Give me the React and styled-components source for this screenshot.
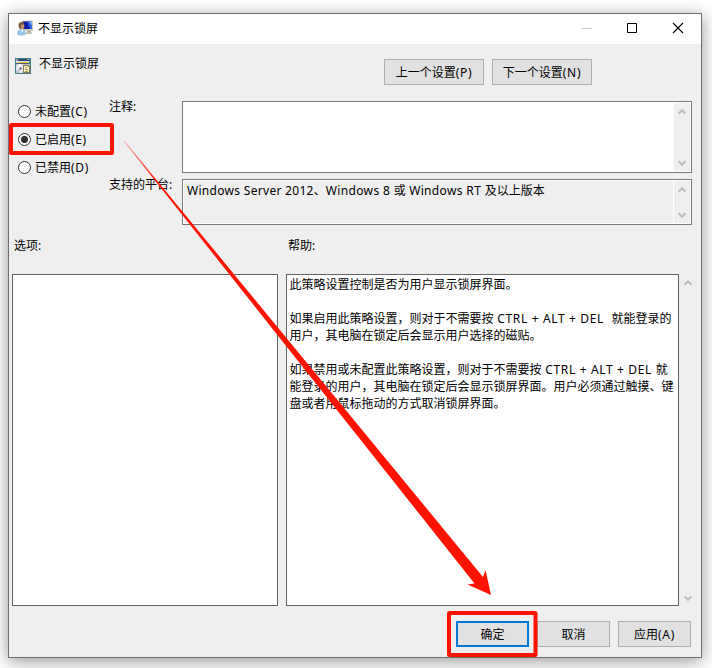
import styled, { createGlobalStyle } from 'styled-components';

const GlobalStyle = createGlobalStyle`
  * {
    box-sizing: border-box;
  }
  body {
    margin: 0;
    background: #fff;
    color: #000;
    font: 12px/17px 'Noto Sans', 'Noto Sans CJK SC', sans-serif;
    overflow: hidden;
  }
`;

//Latin runs are set a bit wider than the Chinese text around them
const Latin = styled.span`
  letter-spacing: ${({ $track }) => $track || 0.65}px;
  white-space: pre;
`;

const Chevron = ({ down }) => (
  <svg width='8' height='7' viewBox='0 0 8 7'>
    <path
      d={down ? 'M0.5 1.2 L4 4.7 L7.5 1.2' : 'M0.5 5.8 L4 2.3 L7.5 5.8'}
      fill='none'
      stroke='#bdbdbd'
      strokeWidth='2.2'
    />
  </svg>
);

const Scrollbar = () => (
  <StyledScrollbar>
    <Chevron />
    <Chevron down />
  </StyledScrollbar>
);

//user in front of a monitor
const TitleIcon = () => (
  <svg width='17' height='16' viewBox='0 0 17 16'>
    <path d='M5 0.500h11v10.500H5z' fill='#cdccc0' />
    <path d='M6 1.500h9v7.500H6z' fill='#0b1fa8' />
    <path d='M10 1.500h5v7.500h-2z' fill='#2f62e0' />
    <path d='M12 1.500h3v4z' fill='#8db4f5' />
    <path d='M10 11h4v2h-4z' fill='#aaa99c' />
    <path d='M8 12.500h7v1.500H8z' fill='#c4c3b8' />
    <path d='M1.500 5c0-2 1.500-3 3.500-3s2.500 2 2.500 4-1 3.500-3 3.500S1.500 7 1.500 5z' fill='#77573a' />
    <path d='M4 4.500h3v3.500L5.500 9.500 4 8z' fill='#c4976c' />
    <path d='M0 14c0-3 1.500-5 4.500-5S9 11 9 14l-2 1.500H2z' fill='#9ac3e6' />
    <path d='M3.500 9.500l2 3 1-3z' fill='#eef7fd' />
  </svg>
);

//settings window with a disc and a sheet
const PolicyIcon = () => (
  <svg width='16' height='16' viewBox='0 0 16 16' shapeRendering='crispEdges'>
    <path d='M0 0h16v16H0z' fill='#3f7f86' />
    <path d='M1 1h13v2H1z' fill='#2c4678' />
    <path d='M1 1h2v2H1zM12 1h2v1h-2z' fill='#9aa9bf' />
    <path d='M1 3h13v3H1z' fill='#d9d9d2' />
    <path d='M4 4h9v1H4z' fill='#f0c52c' />
    <path d='M1 5h13v1H1z' fill='#4b5a72' />
    <path d='M1 6h14v9H1z' fill='#b9bfc4' />
    <g shapeRendering='auto'>
      <circle cx='5.500' cy='10.500' r='4.500' fill='#e9e9f1' />
      <path d='M5.500 10.500L2 7.500l3-1.500z' fill='#fff' />
      <path d='M5.500 10.500l-4 2 2 2z' fill='#c3b8d8' />
      <circle cx='5.500' cy='10.500' r='1.200' fill='#6a6a78' />
    </g>
    <path d='M8 7h5l2 2v6H8z' fill='#8a7a4e' />
    <path d='M9 8h4v1h1v5H9z' fill='#fff3c4' />
    <path d='M10 9h2v1h-2zM10 11h3v1h-3zM10 13h3v1h-3z' fill='#a8935a' />
  </svg>
);

const choices = [
  { label: '未配置', hotkey: '(C)' },
  { label: '已启用', hotkey: '(E)', checked: true },
  { label: '已禁用', hotkey: '(D)' },
];

const App = () => {
  return (
    <StyledDesktop>
      <GlobalStyle />
      <StyledWindow>
        <StyledTitleBar>
          <TitleIcon />
          <span>不显示锁屏</span>
          <svg width='104' height='12' viewBox='0 0 104 12'>
            <path d='M0 6.500h10' stroke='#ccc' />
            <path d='M45.500 1.500h9v9h-9z' fill='none' stroke='#000' />
            <path d='M91 1l10 10M101 1l-10 10' stroke='#000' strokeWidth='1.1' />
          </svg>
        </StyledTitleBar>
        <StyledHeader>
          <PolicyIcon />
          <h1>不显示锁屏</h1>
          <StyledButton $width={100}>
            上一个设置<Latin>(P)</Latin>
          </StyledButton>
          <StyledButton $width={100}>
            下一个设置<Latin>(N)</Latin>
          </StyledButton>
        </StyledHeader>
        <StyledSettings>
          <StyledRadios>
            {choices.map(({ label, hotkey, checked }) => (
              <StyledRadio key={label}>
                <StyledDot $checked={checked} />
                <span>
                  {label}
                  <Latin>{hotkey}</Latin>
                </span>
              </StyledRadio>
            ))}
          </StyledRadios>
          <StyledFields>
            <StyledFieldLabel>注释:</StyledFieldLabel>
            <StyledField $height={72} $fill='#fff'>
              <StyledFieldText />
              <Scrollbar />
            </StyledField>
            <StyledFieldLabel>支持的平台:</StyledFieldLabel>
            <StyledField $height={46} $fill='#efefef'>
              <StyledFieldText>
                <Latin $track={0.3}>Windows Server 2012</Latin>、
                <Latin $track={0.35}>Windows 8 </Latin>或
                <Latin $track={0.35}> Windows RT </Latin>及以上版本
              </StyledFieldText>
              <Scrollbar />
            </StyledField>
          </StyledFields>
        </StyledSettings>
        <StyledCaptions>
          <span>选项:</span>
          <span>帮助:</span>
        </StyledCaptions>
        <StyledPanels>
          <StyledPanel />
          <StyledPanel>
            <p>此策略设置控制是否为用户显示锁屏界面。</p>
            <p>
              如果启用此策略设置，则对于不需要按
              <Latin> CTRL + ALT + DEL  </Latin>就能登录的
              <br />
              用户，其电脑在锁定后会显示用户选择的磁贴。
            </p>
            <p>
              如果禁用或未配置此策略设置，则对于不需要按
              <Latin> CTRL + ALT + DEL </Latin>就
              <br />
              能登录的用户，其电脑在锁定后会显示锁屏界面。用户必须通过触摸、键
              <br />
              盘或者用鼠标拖动的方式取消锁屏界面。
            </p>
          </StyledPanel>
          <Scrollbar />
        </StyledPanels>
        <StyledFooter>
          <StyledButton $primary>确定</StyledButton>
          <StyledButton>取消</StyledButton>
          <StyledButton>
            应用<Latin>(A)</Latin>
          </StyledButton>
        </StyledFooter>
      </StyledWindow>
      <StyledMarks width='712' height='668' viewBox='0 0 712 668'>
        <defs>
          <linearGradient
            id='fade'
            gradientUnits='userSpaceOnUse'
            x1='124'
            y1='141'
            x2='155'
            y2='180'
          >
            <stop offset='0' stopColor='#ff1300' stopOpacity='0.4' />
            <stop offset='1' stopColor='#ff1300' />
          </linearGradient>
        </defs>
        <rect x='11' y='125' width='101' height='28' rx='0.5' />
        <rect x='449' y='613' width='86.500' height='42' rx='0.5' />
        <path
          d='M124 141.500L124.500 141L483 577L485.500 570L491 595L467.500 584.500L474.500 583.500Z'
          fill='url(#fade)'
        />
      </StyledMarks>
    </StyledDesktop>
  );
};

export default App;

const StyledDesktop = styled.div`
  width: 712px;
  height: 668px;
  padding: 13px 10px 10px 8px;
  position: relative;
  overflow: hidden;
`;

const StyledWindow = styled.div`
  width: 694px;
  height: 645px;
  border: 1px solid #6e6e6e;
  background: #efefef;
  box-shadow: 0 3px 16px rgba(0, 0, 0, 0.42);
`;

const StyledTitleBar = styled.div`
  height: 30px;
  padding: 0 15px 2px 8px;
  background: #fff;
  display: flex;
  align-items: center;
  span {
    margin-left: 4px;
    flex: 1;
  }
`;

const StyledHeader = styled.div`
  height: 57px;
  padding: 15px 109px 0 6px;
  display: flex;
  align-items: flex-start;
  gap: 8px;
  h1 {
    flex: 1;
    margin: -4px 0 0;
    font: inherit;
  }
  svg {
    margin-top: -1px;
  }
`;

const StyledButton = styled.button`
  width: ${({ $width }) => $width || 73}px;
  height: 26px;
  padding: 0;
  border: ${({ $primary }) =>
    $primary ? '2px solid #0078d7' : '1px solid #adadad'};
  background: #e1e1e1;
  color: #000;
  font: inherit;
  flex: none;
`;

const StyledSettings = styled.div`
  height: 124px;
  padding: 0 9px;
  display: flex;
`;

const StyledRadios = styled.div`
  width: 91px;
  padding-top: 2px;
`;

const StyledRadio = styled.div`
  height: 28px;
  display: flex;
  align-items: flex-start;
  gap: 4px;
`;

const StyledDot = styled.i`
  width: 13px;
  height: 13px;
  margin-top: 2px;
  border: 1px solid #333;
  border-radius: 50%;
  background: ${({ $checked }) =>
    $checked ? 'radial-gradient(circle, #333 3.3px, #fff 3.9px)' : '#fff'};
`;

const StyledFields = styled.div`
  flex: 1;
  display: grid;
  grid-template-columns: 73px 1fr;
  row-gap: 6px;
  align-content: start;
`;

const StyledFieldLabel = styled.span`
  margin-top: -3px;
`;

const StyledField = styled.div`
  height: ${({ $height }) => $height}px;
  padding: 1px;
  border: 1px solid #7a7a7a;
  background: ${({ $fill }) => $fill};
  box-shadow: inset 0 0 0 1px #fff;
  display: flex;
`;

const StyledFieldText = styled.div`
  flex: 1;
  padding: 1px 3px;
  border-right: 1px solid #fff;
`;

const StyledScrollbar = styled.div`
  width: 16px;
  padding: 5px 1px 4px 0;
  background: #efefef;
  display: flex;
  flex-direction: column;
  align-items: center;
  justify-content: space-between;
`;

const StyledCaptions = styled.div`
  height: 49px;
  padding: 12px 5px 0;
  display: grid;
  grid-template-columns: 274px 1fr;
`;

const StyledPanels = styled.div`
  height: 332px;
  padding: 0 5px 0 3px;
  display: grid;
  grid-template-columns: 266px 8px 393px 1px 16px;
  & > :nth-child(2) {
    grid-column: 3;
  }
  & > :nth-child(3) {
    grid-column: 5;
  }
`;

const StyledPanel = styled.div`
  padding: 1px 2.5px;
  border: 1px solid #646464;
  background: #fff;
  white-space: nowrap;
  p {
    margin: 0 0 17px;
  }
`;

const StyledFooter = styled.div`
  padding: 15px 10px 0 0;
  display: flex;
  justify-content: flex-end;
  gap: 8px;
`;

//red annotations drawn over the dialog
const StyledMarks = styled.svg`
  position: absolute;
  top: 0;
  left: 0;
  rect {
    fill: none;
    stroke: #ff1300;
    stroke-width: 4px;
  }
`;
